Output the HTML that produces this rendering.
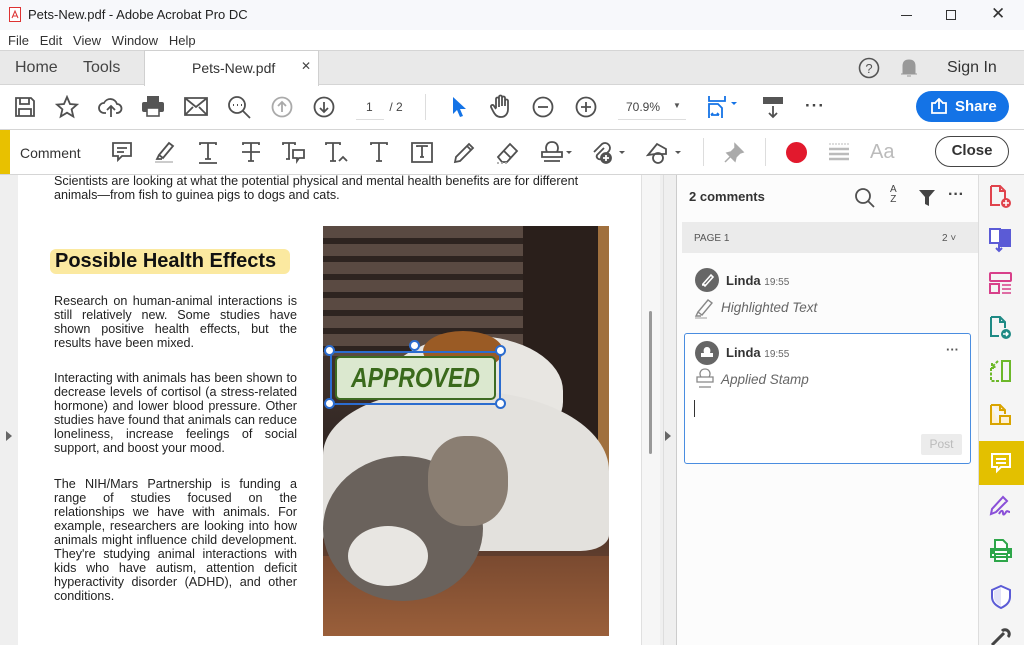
<!DOCTYPE html>
<html><head><meta charset="utf-8"><style>
*{box-sizing:border-box;margin:0;padding:0}
body{width:1024px;height:645px;overflow:hidden;font-family:"Liberation Sans",sans-serif;background:#fff;position:relative;color:#2c2c2c}
.a{position:absolute}
.ic{position:absolute;stroke:#505050;fill:none;stroke-width:1.8}
.pt{font-size:12.6px;line-height:14px;color:#222;font-family:"Liberation Sans",sans-serif}
</style></head><body>
<!-- title -->
<div class="a" style="left:0;top:0;width:1024px;height:30px;background:#f7f8fb"></div>
<svg class="a" style="left:9px;top:7px" width="12" height="15"><rect x="0.5" y="0.5" width="11" height="14" fill="#fff" stroke="#d33"/><path d="M3 11 L6 4 L9 11 M4 9h4" stroke="#d33" fill="none"/></svg>
<div class="a" style="left:28px;top:7px;font-size:13px;color:#222">Pets-New.pdf - Adobe Acrobat Pro DC</div>
<div class="a" style="left:901px;top:15px;width:11px;height:1px;background:#333"></div>
<div class="a" style="left:946px;top:10px;width:10px;height:10px;border:1px solid #333"></div>
<div class="a" style="left:991px;top:4px;font-size:17px;color:#333">✕</div>
<!-- menu -->
<div class="a" style="left:0;top:30px;width:1024px;height:20px;background:#fff"></div>
<div class="a" style="left:8px;top:33px;font-size:13px;color:#333;word-spacing:0">File&nbsp;&nbsp;&nbsp;Edit&nbsp;&nbsp;&nbsp;View&nbsp;&nbsp;&nbsp;Window&nbsp;&nbsp;&nbsp;Help</div>
<!-- tabs -->
<div class="a" style="left:0;top:50px;width:1024px;height:35px;background:#e9e9e9;border-top:1px solid #d5d5d5;border-bottom:1px solid #d5d5d5"></div>
<div class="a" style="left:144px;top:50px;width:175px;height:36px;background:#fff;border-left:1px solid #d0d0d0;border-right:1px solid #d0d0d0;border-top:1px solid #d0d0d0"></div>
<div class="a" style="left:15px;top:59px;font-size:16px;color:#444">Home</div>
<div class="a" style="left:83px;top:59px;font-size:16px;color:#444">Tools</div>
<div class="a" style="left:192px;top:60px;font-size:14px;color:#333">Pets-New.pdf</div>
<div class="a" style="left:301px;top:59px;font-size:12px;color:#444">✕</div>
<svg class="a" style="left:858px;top:57px" width="22" height="22"><circle cx="11" cy="11" r="9.5" stroke="#555" stroke-width="1.6" fill="none"/><text x="11" y="16" font-size="13" text-anchor="middle" fill="#555" font-family="Liberation Sans">?</text></svg>
<svg class="a" style="left:899px;top:57px" width="20" height="22"><path d="M4 16 L4 9 Q4 3 10 3 Q16 3 16 9 L16 16 Z M2 17h16 M8 19h4" fill="#999" stroke="#999"/></svg>
<div class="a" style="left:947px;top:59px;font-size:16px;color:#333">Sign In</div>
<!-- toolbar -->
<div class="a" style="left:0;top:129px;width:1024px;height:1px;background:#d5d5d5"></div>
<svg class="ic" style="left:14px;top:96px" width="22" height="22"><path d="M2 2h15l3 3v15H2z M6 2v6h9V2 M5 20v-7h12v7"/></svg>
<svg class="ic" style="left:55px;top:95px" width="24" height="24"><path d="M12 2l3 7 7 .6-5.4 4.7 1.7 7.2L12 17.7 5.7 21.5l1.7-7.2L2 9.6 9 9z"/></svg>
<svg class="ic" style="left:98px;top:95px" width="26" height="24"><path d="M8 18H6a5 5 0 0 1 0-10 7 7 0 0 1 13 1 4.5 4.5 0 0 1 0 9h-1 M13 22V11 M9 15l4-4 4 4"/></svg>
<svg class="a" style="left:141px;top:95px" width="24" height="22"><path d="M6 1h12v6H6z" fill="#555"/><rect x="1" y="7" width="22" height="10" rx="2" fill="#555"/><rect x="6" y="13" width="12" height="8" fill="#fff" stroke="#555" stroke-width="1.6"/></svg>
<svg class="ic" style="left:184px;top:97px" width="24" height="20"><path d="M1 1h22v17H1z M1 1l11 9 11-9 M1 18l8-8 M23 18l-8-8"/></svg>
<svg class="ic" style="left:227px;top:95px" width="26" height="26"><circle cx="10" cy="10" r="8"/><path d="M16 16l7 7"/><path d="M6 10h1 M10 10h1 M14 10h1" stroke-width="2"/></svg>
<svg class="ic" style="left:271px;top:96px;stroke:#aaa" width="22" height="22"><circle cx="11" cy="11" r="9.5"/><path d="M11 16V6 M7 10l4-4 4 4"/></svg>
<svg class="ic" style="left:313px;top:96px" width="22" height="22"><circle cx="11" cy="11" r="9.5"/><path d="M11 6v10 M7 12l4 4 4-4"/></svg>
<div class="a" style="left:356px;top:100px;font-size:12px;color:#444">&nbsp;&nbsp;&nbsp;1&nbsp;&nbsp;&nbsp;&nbsp;&nbsp;/ 2</div>
<div class="a" style="left:356px;top:119px;width:28px;height:1px;background:#ddd"></div>
<div class="a" style="left:425px;top:94px;width:1px;height:26px;background:#ddd"></div>
<svg class="a" style="left:450px;top:96px" width="18" height="22"><path d="M3 1v17l4-4 3 7 3-1-3-7h6z" fill="#1473e6"/></svg>
<svg class="ic" style="left:489px;top:94px" width="24" height="26"><path d="M7 14V5a1.5 1.5 0 0 1 3 0v8 M10 12V3a1.5 1.5 0 0 1 3 0v9 M13 12V4a1.5 1.5 0 0 1 3 0v8 M16 12V7a1.5 1.5 0 0 1 3 0v8c0 5-3 8-7 8s-6-2-8-6l-2-4a1.5 1.5 0 0 1 3-1l2 3"/></svg>
<svg class="ic" style="left:532px;top:96px" width="22" height="22"><circle cx="11" cy="11" r="9.5"/><path d="M6 11h10"/></svg>
<svg class="ic" style="left:575px;top:96px" width="22" height="22"><circle cx="11" cy="11" r="9.5"/><path d="M6 11h10 M11 6v10"/></svg>
<div class="a" style="left:626px;top:100px;font-size:12px;color:#444">70.9%</div>
<div class="a" style="left:673px;top:101px;font-size:8px;color:#555">▼</div>
<div class="a" style="left:618px;top:119px;width:68px;height:1px;background:#ddd"></div>
<svg class="a" style="left:707px;top:95px" width="36" height="24"><path d="M2 1v5h16V1 M2 23V9h9l4 4v10 M4 20h8 M4 20l2-2 M12 20l-2-2" stroke="#1473e6" stroke-width="1.8" fill="none"/><path d="M24 7h6l-3 3z" fill="#1473e6"/></svg>
<svg class="ic" style="left:762px;top:96px" width="22" height="24"><rect x="1" y="1" width="20" height="7" fill="#555" stroke="none"/><path d="M11 10v11 M7 17l4 4 4-4"/></svg>
<div class="a" style="left:805px;top:96px;font-size:17px;color:#444;letter-spacing:1px;font-weight:bold">···</div>
<div class="a" style="left:916px;top:91px;width:93px;height:31px;border-radius:16px;background:#1473e6"></div>
<svg class="a" style="left:930px;top:98px" width="18" height="16"><path d="M6 5H2v10h14V5h-4 M9 11V1 M5 5l4-4 4 4" stroke="#fff" stroke-width="1.8" fill="none"/></svg>
<div class="a" style="left:955px;top:98px;font-size:15px;color:#fff;font-weight:bold">Share</div>
<!-- comment bar -->
<div class="a" style="left:0;top:130px;width:10px;height:45px;background:#e8c100"></div>
<div class="a" style="left:0;top:174px;width:1024px;height:1px;background:#d5d5d5"></div>
<div class="a" style="left:20px;top:145px;font-size:14px;color:#333">Comment</div>
<svg class="ic" style="left:111px;top:141px" width="22" height="22"><path d="M2 2h18v13H11l-4 4v-4H2z M6 7h10 M6 11h7"/></svg>
<svg class="ic" style="left:153px;top:141px" width="24" height="22"><path d="M6 14l10-12 4 3-10 12z M6 14l-2 4h5" /><path d="M2 21h18" stroke="#ccc" stroke-width="2"/></svg>
<svg class="ic" style="left:197px;top:141px" width="22" height="24"><path d="M3 4V2h16v2 M11 2v16 M8 18h6 M2 22h18"/></svg>
<svg class="ic" style="left:240px;top:141px" width="22" height="22"><path d="M3 4V2h16v2 M11 2v18 M8 20h6 M2 11h18"/></svg>
<svg class="ic" style="left:282px;top:141px" width="24" height="24"><path d="M1 4V2h12v2 M7 2v16 M4 18h4 M11 9h11v8h-5l-2 3v-3h-4z"/></svg>
<svg class="ic" style="left:325px;top:141px" width="24" height="24"><path d="M1 4V2h14v2 M8 2v18 M5 20h6 M14 20l4-4 4 4"/></svg>
<svg class="ic" style="left:368px;top:141px" width="22" height="22"><path d="M3 4V2h16v2 M11 2v18 M8 20h6"/></svg>
<svg class="ic" style="left:410px;top:141px" width="24" height="22"><path d="M2 2h20v19H2z M7 6V5h10v1 M12 5v11 M10 16h4"/></svg>
<svg class="ic" style="left:452px;top:141px" width="24" height="24"><path d="M3 21l1-5L17 3l4 4L8 20z M15 5l4 4"/></svg>
<svg class="ic" style="left:495px;top:141px" width="26" height="24"><path d="M3 16L15 3l7 7-10 11H7z M9 10l7 7"/><path d="M2 22h10" stroke="#aaa" stroke-dasharray="2 2"/></svg>
<svg class="ic" style="left:539px;top:140px" width="34" height="26"><path d="M8 12c-2-4-1-10 5-10s7 6 5 10z M3 12h20v5H3z M5 21h16"/><path d="M27 11h6l-3 3z" fill="#555" stroke="none"/></svg>
<svg class="ic" style="left:590px;top:140px" width="36" height="26"><path d="M14 8L7 15a3 3 0 0 0 4 4l8-8a5 5 0 0 0-7-7l-8 8"/><circle cx="16" cy="18" r="5" fill="#555"/><path d="M16 15v6 M13 18h6" stroke="#fff"/><path d="M29 11h6l-3 3z" fill="#555" stroke="none"/></svg>
<svg class="ic" style="left:646px;top:140px" width="36" height="26"><path d="M2 15l9-11 9 5v5H9z"/><circle cx="12" cy="18" r="5"/><path d="M29 11h6l-3 3z" fill="#555" stroke="none"/></svg>
<div class="a" style="left:703px;top:138px;width:1px;height:28px;background:#ddd"></div>
<svg class="a" style="left:723px;top:142px" width="22" height="22"><path d="M12 2l8 8-3 1-4 4-1 4-8-8 4-1 4-4z M7 15l-5 5" fill="#aaa" stroke="#aaa" stroke-width="1.5"/></svg>
<div class="a" style="left:765px;top:138px;width:1px;height:28px;background:#ddd"></div>
<div class="a" style="left:786px;top:142px;width:21px;height:21px;border-radius:50%;background:#e2192d"></div>
<svg class="a" style="left:828px;top:142px" width="22" height="20"><path d="M1 2h20" stroke="#bbb" stroke-dasharray="2 1"/><path d="M1 7h20 M1 12h20 M1 17h20" stroke="#bbb" stroke-width="2.5"/></svg>
<div class="a" style="left:870px;top:141px;font-size:20px;color:#bbb">Aa</div>
<div class="a" style="left:935px;top:136px;width:74px;height:31px;border-radius:16px;border:1.5px solid #444;text-align:center;line-height:28px;font-size:15px;font-weight:bold;color:#333">Close</div>
<!-- content -->
<div class="a" style="left:0;top:175px;width:676px;height:470px;background:#efefef"></div>
<div class="a" style="left:18px;top:175px;width:623px;height:470px;background:#fff"></div>
<div class="a" style="left:641px;top:175px;width:19px;height:470px;background:#f6f6f6;border-left:1px solid #e0e0e0"></div>
<div class="a" style="left:649px;top:311px;width:3px;height:143px;background:#999;border-radius:2px"></div>
<div class="a" style="left:663px;top:175px;width:1px;height:470px;background:#ddd"></div>
<div class="a" style="left:676px;top:175px;width:1px;height:470px;background:#ccc"></div>
<div class="a" style="left:6px;top:431px;width:0;height:0;border-top:5px solid transparent;border-bottom:5px solid transparent;border-left:6px solid #666"></div>
<div class="a" style="left:665px;top:431px;width:0;height:0;border-top:5px solid transparent;border-bottom:5px solid transparent;border-left:6px solid #666"></div>
<div class="a pt" style="left:54px;top:174px;width:560px">Scientists are looking at what the potential physical and mental health benefits are for different animals—from fish to guinea pigs to dogs and cats.</div>
<div class="a" style="left:50px;top:249px;width:240px;height:25px;background:#fbe9a0;border-radius:6px"></div>
<div class="a" style="left:55px;top:250px;font-size:20px;font-weight:bold;color:#111">Possible Health Effects</div>
<div class="a pt" style="left:54px;top:294px;width:243px;text-align:justify">Research on human-animal interactions is still relatively new. Some studies have shown positive health effects, but the results have been mixed.</div>
<div class="a pt" style="left:54px;top:371px;width:243px;text-align:justify">Interacting with animals has been shown to decrease levels of cortisol (a stress-related hormone) and lower blood pressure. Other studies have found that animals can reduce loneliness, increase feelings of social support, and boost your mood.</div>
<div class="a pt" style="left:54px;top:477px;width:243px;text-align:justify">The NIH/Mars Partnership is funding a range of studies focused on the relationships we have with animals. For example, researchers are looking into how animals might influence child development. They're studying animal interactions with kids who have autism, attention deficit hyperactivity disorder (ADHD), and other conditions.</div>
<!-- photo -->
<div class="a" style="left:323px;top:226px;width:286px;height:410px;background:linear-gradient(180deg,#4a3a33 0%,#3b2e29 40%,#2d2421 60%,#6a4330 85%,#8a5535 100%);overflow:hidden">
 <div class="a" style="left:0;top:0;width:286px;height:130px;background:repeating-linear-gradient(180deg,#5a4a42 0 12px,#2e2420 12px 18px)"></div>
 <div class="a" style="left:200px;top:0;width:86px;height:300px;background:#2a1f1b"></div>
 <div class="a" style="left:275px;top:0;width:11px;height:300px;background:#a0703e"></div>
 <div class="a" style="left:0;top:330px;width:286px;height:80px;background:linear-gradient(180deg,#7a4a30,#9a5f3a)"></div>
 <div class="a" style="left:60px;top:110px;width:180px;height:110px;border-radius:50% 50% 40% 40%;background:#e8e6e2"></div>
 <div class="a" style="left:100px;top:105px;width:80px;height:40px;border-radius:50%;background:#9a5b25"></div>
 <div class="a" style="left:0;top:165px;width:286px;height:160px;border-radius:40% 50% 10% 10%;background:#e3e1dd"></div>
 <div class="a" style="left:0;top:230px;width:160px;height:145px;border-radius:50%;background:#6a625c"></div>
 <div class="a" style="left:105px;top:210px;width:80px;height:90px;border-radius:45%;background:#8a7e72"></div>
 <div class="a" style="left:25px;top:300px;width:80px;height:60px;border-radius:50%;background:#e8e6e2"></div>
</div>
<!-- stamp -->
<div class="a" style="left:330px;top:351px;width:171px;height:54px;border:2px solid #2b6ccf"></div>
<div class="a" style="left:335px;top:356px;width:161px;height:44px;background:#dbe8cf;border:2px solid #3d6b22;border-radius:5px"></div>
<div class="a" style="left:335px;top:362px;width:161px;text-align:center;font-size:28px;line-height:32px;font-weight:bold;font-style:italic;color:#3a6a1c;transform:scaleX(0.82)">APPROVED</div>
<div class="a" style="left:324px;top:345px;width:11px;height:11px;border-radius:50%;background:#fff;border:2px solid #2b6ccf"></div>
<div class="a" style="left:409px;top:340px;width:11px;height:11px;border-radius:50%;background:#fff;border:2px solid #2b6ccf"></div>
<div class="a" style="left:495px;top:345px;width:11px;height:11px;border-radius:50%;background:#fff;border:2px solid #2b6ccf"></div>
<div class="a" style="left:324px;top:398px;width:11px;height:11px;border-radius:50%;background:#fff;border:2px solid #2b6ccf"></div>
<div class="a" style="left:495px;top:398px;width:11px;height:11px;border-radius:50%;background:#fff;border:2px solid #2b6ccf"></div>
<!-- comments panel -->
<div class="a" style="left:677px;top:175px;width:301px;height:470px;background:#fcfcfc"></div>
<div class="a" style="left:689px;top:189px;font-size:13px;font-weight:bold;color:#333">2 comments</div>
<svg class="ic" style="left:854px;top:187px" width="22" height="22"><circle cx="9" cy="9" r="7"/><path d="M14 14l6 6"/></svg>
<div class="a" style="left:890px;top:185px;font-size:10px;line-height:10px;color:#444;text-align:center">A<br>Z</div>
<svg class="a" style="left:918px;top:189px" width="18" height="18"><path d="M1 1h16l-6 7v9l-4-2V8z" fill="#444"/></svg>
<div class="a" style="left:948px;top:186px;font-size:16px;font-weight:bold;color:#444">···</div>
<div class="a" style="left:682px;top:222px;width:296px;height:31px;background:#ebebeb"></div>
<div class="a" style="left:694px;top:233px;font-size:10px;color:#555">PAGE 1</div>
<div class="a" style="left:942px;top:233px;font-size:10px;color:#555">2 ˅</div>
<div class="a" style="left:695px;top:268px;width:24px;height:24px;border-radius:50%;background:#666"></div>
<svg class="a" style="left:699px;top:272px" width="16" height="16"><path d="M4 12l8-9 2 2-8 9z M3 13h4" stroke="#fff" stroke-width="1.6" fill="none"/></svg>
<div class="a" style="left:726px;top:273px;font-size:13px;font-weight:bold;color:#333">Linda <span style="font-size:10px;font-weight:normal;color:#666">19:55</span></div>
<svg class="ic" style="left:694px;top:297px;stroke:#888;stroke-width:1.4" width="22" height="22"><path d="M4 15l10-12 4 3-10 12z M4 15l-2 4h5"/><path d="M1 21h12" stroke="#ccc" stroke-width="2"/></svg>
<div class="a" style="left:721px;top:300px;font-size:13.5px;font-style:italic;color:#666">Highlighted Text</div>
<div class="a" style="left:684px;top:333px;width:287px;height:131px;border:1.5px solid #4a8de0;border-radius:3px;background:#fff"></div>
<div class="a" style="left:695px;top:341px;width:24px;height:24px;border-radius:50%;background:#666"></div>
<svg class="a" style="left:699px;top:345px" width="16" height="16"><path d="M5 8c-1-3 0-6 3-6s4 3 3 6z M2 8h12v4H2z" fill="#fff"/></svg>
<div class="a" style="left:726px;top:345px;font-size:13px;font-weight:bold;color:#333">Linda <span style="font-size:10px;font-weight:normal;color:#666">19:55</span></div>
<div class="a" style="left:946px;top:342px;font-size:13px;font-weight:bold;color:#555">···</div>
<svg class="ic" style="left:695px;top:368px;stroke:#888;stroke-width:1.3" width="20" height="22"><path d="M6 9c-2-3-1-8 4-8s6 5 4 8z M2 9h16v5H2z M4 19h12"/></svg>
<div class="a" style="left:721px;top:372px;font-size:13.5px;font-style:italic;color:#666">Applied Stamp</div>
<div class="a" style="left:694px;top:400px;width:1px;height:17px;background:#333"></div>
<div class="a" style="left:921px;top:434px;width:41px;height:21px;background:#ececec;border-radius:2px;text-align:center;line-height:21px;font-size:12px;color:#bbb">Post</div>
<!-- right icons -->
<div class="a" style="left:978px;top:175px;width:46px;height:470px;background:#f5f5f5;border-left:1px solid #ddd"></div>
<div class="a" style="left:979px;top:441px;width:45px;height:44px;background:#e3c000"></div>
<svg class="a" style="left:988px;top:184px" width="26" height="26"><path d="M3 2h9l5 5v8 M3 2v19h9 M12 2v5h5" stroke="#e0434c" stroke-width="2" fill="none"/><circle cx="18" cy="19" r="5" fill="#e0434c"/><path d="M18 16v6 M15 19h6" stroke="#fff" stroke-width="1.5"/></svg>
<svg class="a" style="left:988px;top:227px" width="26" height="26"><path d="M10 2h13v18H12z" fill="#5b5bd6"/><path d="M2 2h10v14H2z" fill="#fff" stroke="#5b5bd6" stroke-width="2"/><path d="M11 15v9 M8 21l3 3 3-3" stroke="#5b5bd6" stroke-width="2" fill="none"/></svg>
<svg class="a" style="left:988px;top:271px" width="26" height="26"><rect x="2" y="2" width="21" height="8" rx="1" fill="none" stroke="#d8408a" stroke-width="2"/><rect x="2" y="13" width="9" height="9" fill="none" stroke="#d8408a" stroke-width="2"/><path d="M14 14h9 M14 18h9 M14 22h9" stroke="#d8408a" stroke-width="1.6"/></svg>
<svg class="a" style="left:988px;top:315px" width="26" height="26"><path d="M3 2h9l5 5v6 M3 2v19h8 M12 2v5h5" stroke="#1f8a85" stroke-width="2" fill="none"/><circle cx="18" cy="19" r="5" fill="#1f8a85"/><path d="M15 19h5 M18 17l2 2-2 2" stroke="#fff" stroke-width="1.4" fill="none"/></svg>
<svg class="a" style="left:988px;top:359px" width="26" height="26"><path d="M14 2h8v20h-8z" fill="none" stroke="#6cb829" stroke-width="2"/><path d="M3 9v13h8 M3 9h3 M10 2L4 8 M4 4v4h4" stroke="#6cb829" stroke-width="2" fill="none" stroke-dasharray="3 1.5"/></svg>
<svg class="a" style="left:988px;top:403px" width="26" height="26"><path d="M3 2h9l5 5v4 M3 2v19h8 M12 2v5h5" stroke="#d9a400" stroke-width="2" fill="#fdf1d4"/><rect x="12" y="13" width="10" height="8" fill="#fdf1d4" stroke="#d9a400" stroke-width="2"/></svg>
<svg class="a" style="left:990px;top:452px" width="22" height="22"><path d="M2 2h18v13H11l-4 4v-4H2z M6 7h10 M6 11h10" stroke="#fff" stroke-width="2" fill="none"/></svg>
<svg class="a" style="left:988px;top:494px" width="26" height="26"><path d="M3 20l1-5L15 3l4 4L8 18z M11 20c2-4 4-4 4-1s2 1 3-1 2 0 4 0" stroke="#8a4fd8" stroke-width="2" fill="none"/></svg>
<svg class="a" style="left:988px;top:538px" width="26" height="26"><path d="M7 2h8l4 4v5H7z M3 11h20v8H3z M7 16h12v7H7z" stroke="#2ea64a" stroke-width="2" fill="#fff"/><path d="M3 11h20v5h-4v-3H7v3H3z" fill="#2ea64a"/></svg>
<svg class="a" style="left:989px;top:584px" width="24" height="26"><path d="M12 2l9 4v7c0 6-5 9-9 11-4-2-9-5-9-11V6z" stroke="#5b5bd6" stroke-width="2" fill="#fff"/><path d="M12 4v18c-3-2-7-4-7-9V7z" fill="#e2e2f8"/></svg>
<svg class="a" style="left:988px;top:628px" width="26" height="17"><path d="M4 17l12-12 M14 3a4 4 0 0 1 6 6" stroke="#444" stroke-width="3" fill="none"/></svg>
</body></html>
